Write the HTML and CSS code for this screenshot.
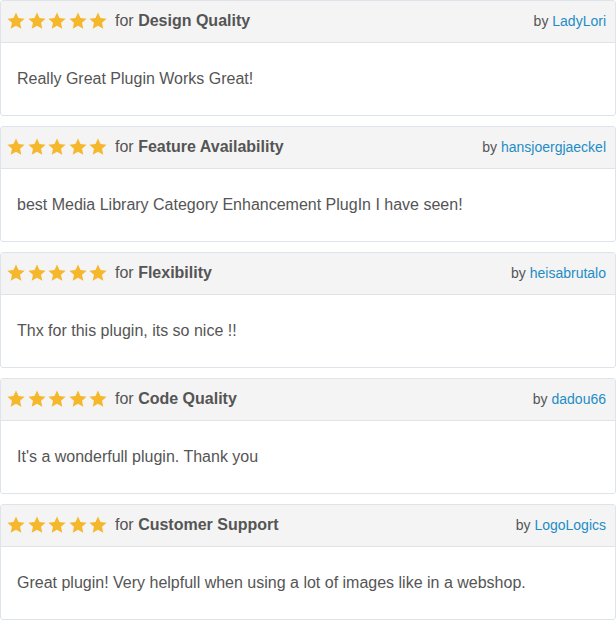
FILE: index.html
```html
<!DOCTYPE html>
<html lang="en">
  <head>
    <meta charset="UTF-8" />
    <meta name="viewport" content="width=device-width, initial-scale=1.0" />
    <title>Reviews</title>
    <link rel="stylesheet" href="styles.css">
  </head>
  <body>
    <div class="reviews">
      <div class="review">
        <div class="review-head">
          <div class="stars">
            <svg viewBox="0 0 20 20"><path d="M10 1.5l2.5 5.6 6.1.6-4.6 4.1 1.3 6-5.3-3.1-5.3 3.1 1.3-6-4.6-4.1 6.1-.6z"/></svg>
            <svg viewBox="0 0 20 20"><path d="M10 1.5l2.5 5.6 6.1.6-4.6 4.1 1.3 6-5.3-3.1-5.3 3.1 1.3-6-4.6-4.1 6.1-.6z"/></svg>
            <svg viewBox="0 0 20 20"><path d="M10 1.5l2.5 5.6 6.1.6-4.6 4.1 1.3 6-5.3-3.1-5.3 3.1 1.3-6-4.6-4.1 6.1-.6z"/></svg>
            <svg viewBox="0 0 20 20"><path d="M10 1.5l2.5 5.6 6.1.6-4.6 4.1 1.3 6-5.3-3.1-5.3 3.1 1.3-6-4.6-4.1 6.1-.6z"/></svg>
            <svg viewBox="0 0 20 20"><path d="M10 1.5l2.5 5.6 6.1.6-4.6 4.1 1.3 6-5.3-3.1-5.3 3.1 1.3-6-4.6-4.1 6.1-.6z"/></svg>
          </div>
          <div class="title">for <b>Design Quality</b></div>
          <div class="author">by <a href="#">LadyLori</a></div>
        </div>
        <div class="review-body">Really Great Plugin Works Great!</div>
      </div>

      <div class="review">
        <div class="review-head">
          <div class="stars">
            <svg viewBox="0 0 20 20"><path d="M10 1.5l2.5 5.6 6.1.6-4.6 4.1 1.3 6-5.3-3.1-5.3 3.1 1.3-6-4.6-4.1 6.1-.6z"/></svg>
            <svg viewBox="0 0 20 20"><path d="M10 1.5l2.5 5.6 6.1.6-4.6 4.1 1.3 6-5.3-3.1-5.3 3.1 1.3-6-4.6-4.1 6.1-.6z"/></svg>
            <svg viewBox="0 0 20 20"><path d="M10 1.5l2.5 5.6 6.1.6-4.6 4.1 1.3 6-5.3-3.1-5.3 3.1 1.3-6-4.6-4.1 6.1-.6z"/></svg>
            <svg viewBox="0 0 20 20"><path d="M10 1.5l2.5 5.6 6.1.6-4.6 4.1 1.3 6-5.3-3.1-5.3 3.1 1.3-6-4.6-4.1 6.1-.6z"/></svg>
            <svg viewBox="0 0 20 20"><path d="M10 1.5l2.5 5.6 6.1.6-4.6 4.1 1.3 6-5.3-3.1-5.3 3.1 1.3-6-4.6-4.1 6.1-.6z"/></svg>
          </div>
          <div class="title">for <b>Feature Availability</b></div>
          <div class="author">by <a href="#">hansjoergjaeckel</a></div>
        </div>
        <div class="review-body">best Media Library Category Enhancement PlugIn I have seen!</div>
      </div>

      <div class="review">
        <div class="review-head">
          <div class="stars">
            <svg viewBox="0 0 20 20"><path d="M10 1.5l2.5 5.6 6.1.6-4.6 4.1 1.3 6-5.3-3.1-5.3 3.1 1.3-6-4.6-4.1 6.1-.6z"/></svg>
            <svg viewBox="0 0 20 20"><path d="M10 1.5l2.5 5.6 6.1.6-4.6 4.1 1.3 6-5.3-3.1-5.3 3.1 1.3-6-4.6-4.1 6.1-.6z"/></svg>
            <svg viewBox="0 0 20 20"><path d="M10 1.5l2.5 5.6 6.1.6-4.6 4.1 1.3 6-5.3-3.1-5.3 3.1 1.3-6-4.6-4.1 6.1-.6z"/></svg>
            <svg viewBox="0 0 20 20"><path d="M10 1.5l2.5 5.6 6.1.6-4.6 4.1 1.3 6-5.3-3.1-5.3 3.1 1.3-6-4.6-4.1 6.1-.6z"/></svg>
            <svg viewBox="0 0 20 20"><path d="M10 1.5l2.5 5.6 6.1.6-4.6 4.1 1.3 6-5.3-3.1-5.3 3.1 1.3-6-4.6-4.1 6.1-.6z"/></svg>
          </div>
          <div class="title">for <b>Flexibility</b></div>
          <div class="author">by <a href="#">heisabrutalo</a></div>
        </div>
        <div class="review-body">Thx for this plugin, its so nice !!</div>
      </div>

      <div class="review">
        <div class="review-head">
          <div class="stars">
            <svg viewBox="0 0 20 20"><path d="M10 1.5l2.5 5.6 6.1.6-4.6 4.1 1.3 6-5.3-3.1-5.3 3.1 1.3-6-4.6-4.1 6.1-.6z"/></svg>
            <svg viewBox="0 0 20 20"><path d="M10 1.5l2.5 5.6 6.1.6-4.6 4.1 1.3 6-5.3-3.1-5.3 3.1 1.3-6-4.6-4.1 6.1-.6z"/></svg>
            <svg viewBox="0 0 20 20"><path d="M10 1.5l2.5 5.6 6.1.6-4.6 4.1 1.3 6-5.3-3.1-5.3 3.1 1.3-6-4.6-4.1 6.1-.6z"/></svg>
            <svg viewBox="0 0 20 20"><path d="M10 1.5l2.5 5.6 6.1.6-4.6 4.1 1.3 6-5.3-3.1-5.3 3.1 1.3-6-4.6-4.1 6.1-.6z"/></svg>
            <svg viewBox="0 0 20 20"><path d="M10 1.5l2.5 5.6 6.1.6-4.6 4.1 1.3 6-5.3-3.1-5.3 3.1 1.3-6-4.6-4.1 6.1-.6z"/></svg>
          </div>
          <div class="title">for <b>Code Quality</b></div>
          <div class="author">by <a href="#">dadou66</a></div>
        </div>
        <div class="review-body">It's a wonderfull plugin. Thank you</div>
      </div>

      <div class="review">
        <div class="review-head">
          <div class="stars">
            <svg viewBox="0 0 20 20"><path d="M10 1.5l2.5 5.6 6.1.6-4.6 4.1 1.3 6-5.3-3.1-5.3 3.1 1.3-6-4.6-4.1 6.1-.6z"/></svg>
            <svg viewBox="0 0 20 20"><path d="M10 1.5l2.5 5.6 6.1.6-4.6 4.1 1.3 6-5.3-3.1-5.3 3.1 1.3-6-4.6-4.1 6.1-.6z"/></svg>
            <svg viewBox="0 0 20 20"><path d="M10 1.5l2.5 5.6 6.1.6-4.6 4.1 1.3 6-5.3-3.1-5.3 3.1 1.3-6-4.6-4.1 6.1-.6z"/></svg>
            <svg viewBox="0 0 20 20"><path d="M10 1.5l2.5 5.6 6.1.6-4.6 4.1 1.3 6-5.3-3.1-5.3 3.1 1.3-6-4.6-4.1 6.1-.6z"/></svg>
            <svg viewBox="0 0 20 20"><path d="M10 1.5l2.5 5.6 6.1.6-4.6 4.1 1.3 6-5.3-3.1-5.3 3.1 1.3-6-4.6-4.1 6.1-.6z"/></svg>
          </div>
          <div class="title">for <b>Customer Support</b></div>
          <div class="author">by <a href="#">LogoLogics</a></div>
        </div>
        <div class="review-body">Great plugin! Very helpfull when using a lot of images like in a webshop.</div>
      </div>
    </div>
  </body>
</html>
```

FILE: styles.css
```css
* {
  box-sizing: border-box;
  margin: 0px;
  padding: 0px;
}
body {
  background: #fff;
  font-family: "Liberation Sans", Arial, sans-serif;
  color: #555;
}
.reviews {
  width: 616px;
  display: flex;
  flex-direction: column;
  gap: 10px;
}
.review {
  height: 116px;
  border: 1px solid #dfe4ea;
  border-radius: 3px;
  overflow: hidden;
  display: flex;
  flex-direction: column;
}
.review-head {
  height: 42px;
  flex-shrink: 0;
  background: #f4f4f4;
  border-bottom: 1px solid #dfe4ea;
  display: flex;
  align-items: center;
  padding: 0 9px 2px 5px;
}
.stars {
  display: flex;
  gap: 0.5px;
  margin-right: 7px;
}
.stars svg {
  width: 20px;
  height: 20px;
  fill: #f5b72c;
}
.title {
  font-size: 16px;
  flex: 1;
}
.title b {
  font-weight: bold;
}
.author {
  font-size: 14px;
}
.author a {
  color: #1e8cc6;
  text-decoration: none;
}
.review-body {
  flex: 1;
  display: flex;
  align-items: center;
  padding: 0 16px 1px;
  font-size: 16px;
}
```
